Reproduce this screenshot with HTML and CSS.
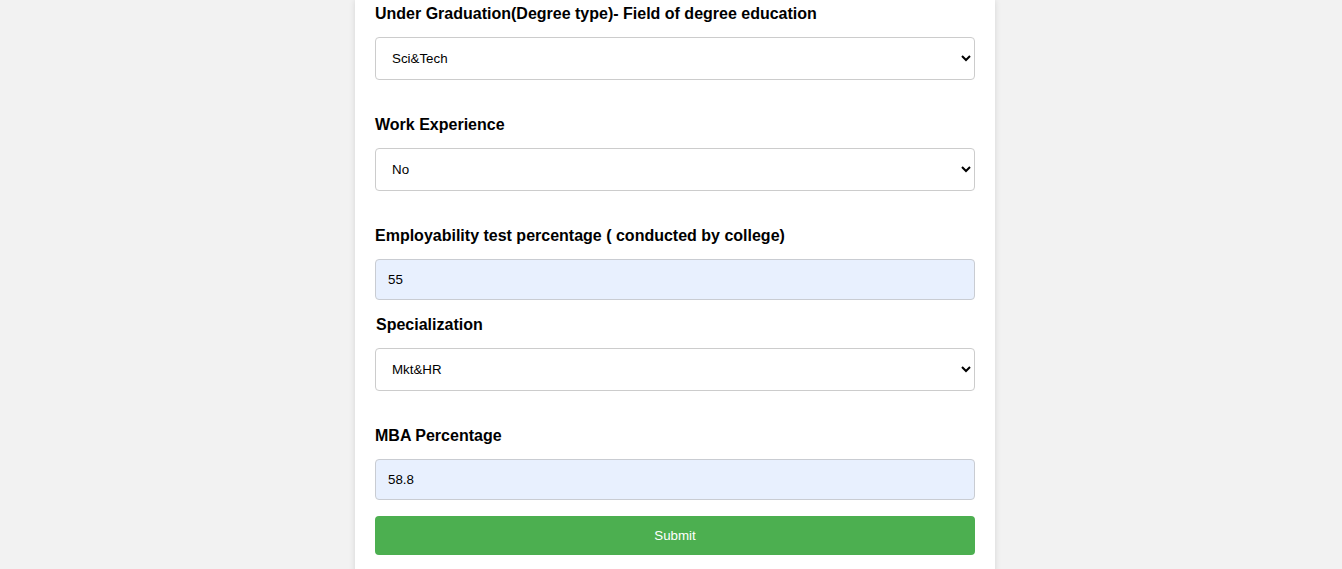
FILE: index.html
```html
<!DOCTYPE html>
<html lang="en">
<head>
<meta charset="utf-8">
<title>Placement Prediction</title>
<link rel="stylesheet" href="styles.css">
</head>
<body>
<div class="page">
  <form class="card">
    <label class="label">Under Graduation(Degree type)- Field of degree education</label>
    <select class="field select">
      <option>Sci&amp;Tech</option>
      <option>Comm&amp;Mgmt</option>
      <option>Others</option>
    </select>

    <label class="label">Work Experience</label>
    <select class="field select">
      <option>No</option>
      <option>Yes</option>
    </select>

    <label class="label">Employability test percentage ( conducted by college)</label>
    <input class="field input" type="text" value="55">

    <label class="label label-shift">Specialization</label>
    <select class="field select">
      <option>Mkt&amp;HR</option>
      <option>Mkt&amp;Fin</option>
    </select>

    <label class="label">MBA Percentage</label>
    <input class="field input" type="text" value="58.8">

    <button class="submit" type="button">Submit</button>
  </form>
</div>
</body>
</html>
```

FILE: styles.css
```css
html, body {
  margin: 0;
  padding: 0;
  background: #f2f2f2;
  font-family: "Liberation Sans", Arial, sans-serif;
  overflow: hidden;
}

.page {
  display: flex;
  justify-content: center;
  padding-left: 8px;
}

.card {
  width: 640px;
  box-sizing: border-box;
  background: #ffffff;
  padding: 4px 20px 20px;
  box-shadow: 0 0 6px rgba(0, 0, 0, 0.12);
  display: flex;
  flex-direction: column;
}

.label {
  display: block;
  font-size: 16px;
  font-weight: bold;
  color: #000;
  line-height: 18px;
  padding-top: 1px;
  margin-bottom: 14px;
}

.label-shift {
  padding-left: 1px;
}

.field {
  width: 100%;
  box-sizing: border-box;
  border: 1px solid #cccccc;
  border-radius: 4px;
  font-family: "Liberation Sans", Arial, sans-serif;
  font-size: 13.33px;
  color: #000;
  padding: 0 12px;
  margin: 0;
}

.select {
  height: 43px;
  background: #ffffff;
  margin-bottom: 35px;
}

.input {
  height: 41px;
  background: #e8f0fe;
  border-color: #c9ccd2;
  margin-bottom: 15px;
}

.submit {
  height: 39px;
  width: 100%;
  margin-top: 1px;
  border: none;
  border-radius: 4px;
  background: #4caf50;
  color: #ffffff;
  font-family: "Liberation Sans", Arial, sans-serif;
  font-size: 13.33px;
  cursor: pointer;
}
```
